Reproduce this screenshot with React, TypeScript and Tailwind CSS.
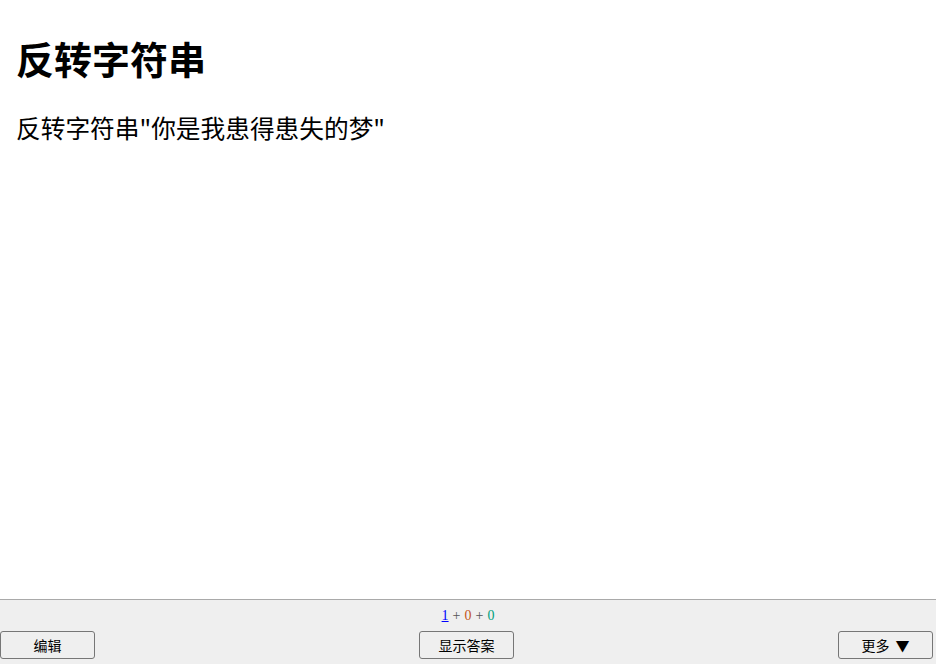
import React from 'react';

const cjk = { fontFamily: '"Noto Sans CJK SC", "Noto Sans", sans-serif' };

export default function App() {
  return (
    <div className="flex h-screen flex-col bg-white text-black" style={cjk}>
      {/* Card */}
      <main className="flex-1 px-4 pt-[33px]">
        <h1 className="text-[38px] font-bold leading-[1.3]">反转字符串</h1>
        <p className="mt-[29px] text-[24.7px] leading-[1.3]">反转字符串"你是我患得患失的梦"</p>
      </main>

      {/* Reviewer bar */}
      <footer className="h-[65px] border-t border-[#a9a9a9] bg-[#efefef]">
        <div className="flex h-[31px] items-center justify-center text-[14px]" style={{ fontFamily: '"Liberation Serif", serif' }}>
          <span className="text-[#0000ff] underline">1</span>
          <span className="mx-[4px] text-[#555]">+</span>
          <span className="text-[#c35617]">0</span>
          <span className="mx-[4px] text-[#555]">+</span>
          <span className="text-[#00a07a]">0</span>
        </div>
        <div className="grid grid-cols-3 items-center pr-[3px]">
          <div>
            <BarButton>编辑</BarButton>
          </div>
          <div className="flex justify-center">
            <BarButton>显示答案</BarButton>
          </div>
          <div className="flex justify-end">
            <BarButton>
              更多<span className="ml-[6px]">▼</span>
            </BarButton>
          </div>
        </div>
      </footer>
    </div>
  );
}

function BarButton({ children }: { children: React.ReactNode }) {
  return (
    <button className="h-[28px] w-[95px] rounded-[3px] border border-[#767676] bg-[#efefef] text-[14px] text-black">
      {children}
    </button>
  );
}
